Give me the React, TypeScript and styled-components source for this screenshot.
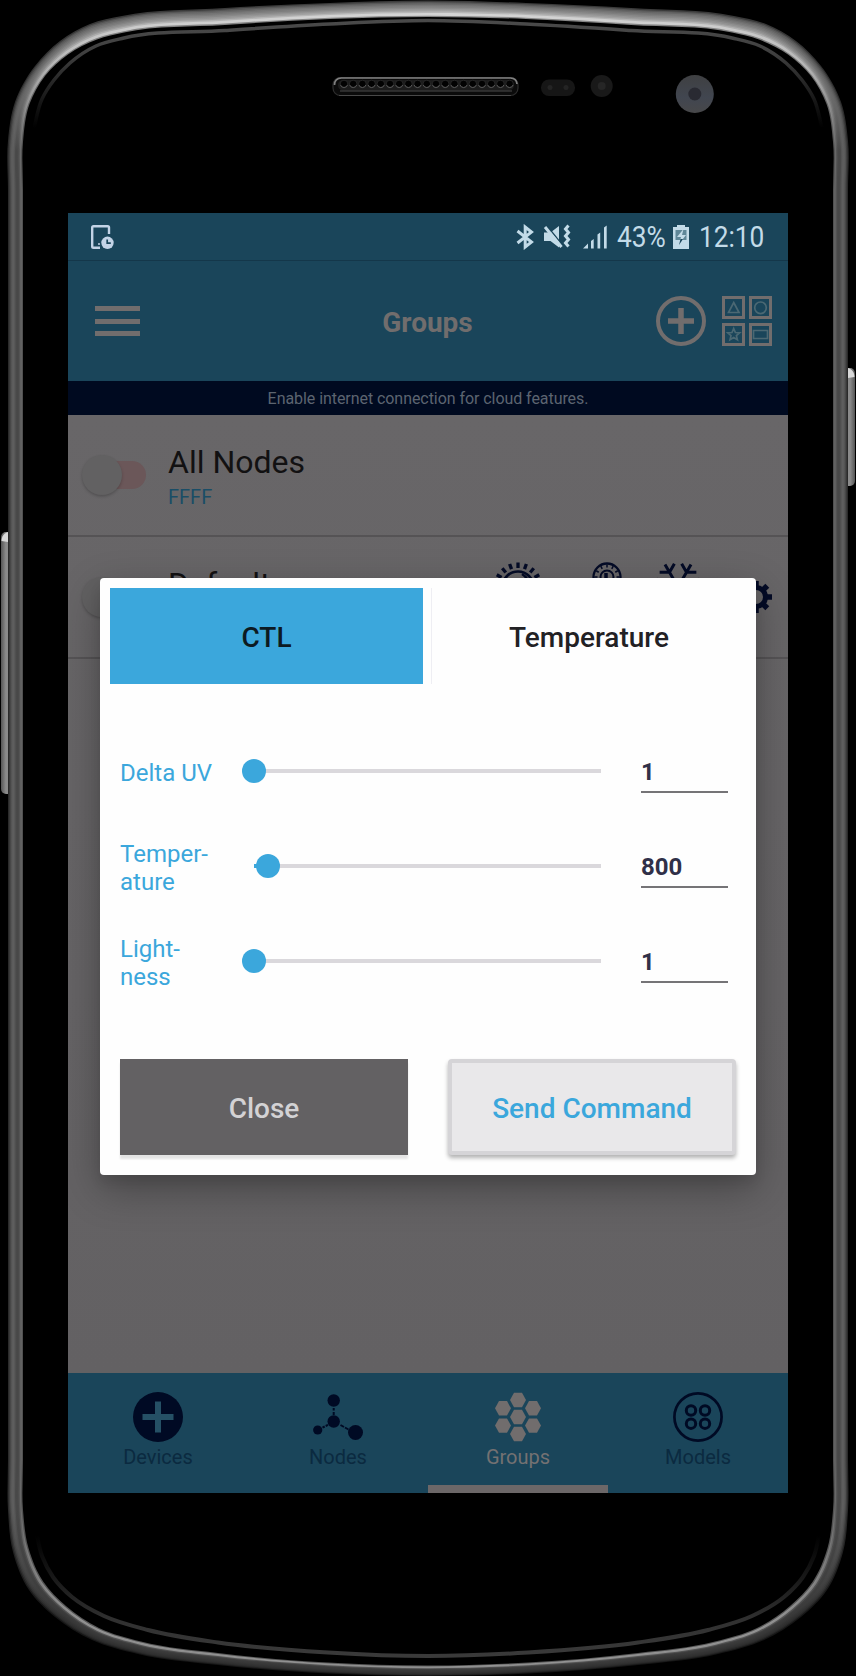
import React from "react";
import styled, { createGlobalStyle } from "styled-components";

const GlobalStyle = createGlobalStyle`
  *, *::before, *::after { box-sizing: border-box; }
  body { margin: 0; background: #000; font-family: Roboto, "Liberation Sans", sans-serif; }
`;

const colors = {
  bar: "#1a455a",
  navy: "#000a24",
  dimWhite: "#716d6d",
  page: "#666466",
  accent: "#3ba7dc",
};

/* ---------- device frame ---------- */

type Pt = [number, number];

const topOuter: Pt[] = [[8, 190], [8, 141], [15, 102], [35, 66], [60, 41], [90, 24], [122, 16], [225, 8], [330, 3], [428, 0.5]];
const topInner: Pt[] = [[23, 190], [23, 142], [29.5, 104], [45, 76], [68, 54.5], [97, 39.5], [124, 32.5], [225, 25], [330, 19], [428, 17]];
const bottomOuter: Pt[] = [[8, 1460], [8, 1510], [13, 1552], [29, 1590], [55, 1617], [92, 1640], [138, 1654], [218, 1665], [328, 1673.5], [428, 1676]];
const bottomInner: Pt[] = [[23, 1460], [23, 1510], [28.5, 1548], [43.5, 1582], [66, 1606], [99, 1628], [141, 1641.5], [218, 1653], [328, 1662.5], [428, 1665.5]];
const topRim: Pt[] = [[34, 128], [42, 99], [54, 80], [70, 63], [96, 46], [124, 38], [225, 30.5], [330, 24], [428, 20.5]];
const bottomRim: Pt[] = [[36, 1530], [42, 1556], [53, 1577], [72, 1597], [104, 1616], [148, 1630], [218, 1642.5], [328, 1652.5], [428, 1656]];

const mirror = (pts: Pt[]): Pt[] => [
  ...pts,
  ...pts.slice(0, -1).reverse().map(([x, y]): Pt => [856 - x, y]),
];

const dist = (a: Pt, b: Pt) => Math.hypot(b[0] - a[0], b[1] - a[1]);

/* smooth curve through unevenly spaced points, tangents weighted by chord length */
function spline(pts: Pt[]): string {
  const tangents = pts.map((p, i): Pt => {
    const a = pts[i - 1];
    const b = pts[i + 1];
    if (!a) return [(b[0] - p[0]) / dist(p, b), (b[1] - p[1]) / dist(p, b)];
    if (!b) return [(p[0] - a[0]) / dist(a, p), (p[1] - a[1]) / dist(a, p)];
    const da = dist(a, p);
    const db = dist(p, b);
    const mix = (k: 0 | 1) =>
      (((p[k] - a[k]) / da) * db + ((b[k] - p[k]) / db) * da) / (da + db);
    return [mix(0), mix(1)];
  });
  let d = "";
  for (let i = 0; i < pts.length - 1; i++) {
    const p = pts[i];
    const q = pts[i + 1];
    const h = dist(p, q) / 3;
    const [t, u] = [tangents[i], tangents[i + 1]];
    d += `C${p[0] + t[0] * h} ${p[1] + t[1] * h} ${q[0] - u[0] * h} ${q[1] - u[1] * h} ${q[0]} ${q[1]}`;
  }
  return d;
}

const blend = (a: Pt[], b: Pt[], t: number): Pt[] =>
  a.map(([x, y], i): Pt => [x + (b[i][0] - x) * t, y + (b[i][1] - y) * t]);

function outline(t: number): string {
  const top = mirror(blend(topOuter, topInner, t));
  const bottom = mirror(blend(bottomOuter, bottomInner, t)).reverse();
  return `M${top[0].join(" ")}${spline(top)}L${bottom[0].join(" ")}${spline(bottom)}Z`;
}

const openCurve = (pts: Pt[]) => {
  const all = mirror(pts);
  return `M${all[0].join(" ")}${spline(all)}`;
};

/* metal shade across the band, outside to inside: [top, side, bottom] */
const shades: [number, number, number][] = [
  [60, 42, 22], [88, 62, 38], [106, 82, 46], [120, 92, 50], [130, 94, 53], [142, 86, 56],
  [155, 74, 58], [168, 72, 62], [190, 74, 82], [220, 86, 140], [220, 104, 148], [140, 80, 88],
];

const gray = (v: number) => `rgb(${v},${v},${v})`;

const FrameSvg = styled.svg`
  position: absolute;
  inset: 0;
`;

function DeviceFrame() {
  return (
    <FrameSvg width="856" height="1676" viewBox="0 0 856 1676">
      <defs>
        {shades.map(([top, side, bottom], i) => (
          <linearGradient key={i} id={`band${i}`} gradientUnits="userSpaceOnUse" x1="0" y1="0" x2="0" y2="1676">
            <stop offset="0" stopColor={gray(top)} />
            <stop offset="0.04" stopColor={gray(Math.round(top * 0.82))} />
            <stop offset="0.09" stopColor={gray(side)} />
            <stop offset="0.9" stopColor={gray(side)} />
            <stop offset="0.965" stopColor={gray(bottom)} />
            <stop offset="1" stopColor={gray(bottom)} />
          </linearGradient>
        ))}
        <linearGradient id="rimTop" gradientUnits="userSpaceOnUse" x1="0" y1="20" x2="0" y2="128">
          <stop offset="0" stopColor="#4a4a4a" />
          <stop offset="0.3" stopColor="#404040" />
          <stop offset="1" stopColor="#000" />
        </linearGradient>
        <linearGradient id="rimBottom" gradientUnits="userSpaceOnUse" x1="0" y1="1535" x2="0" y2="1656">
          <stop offset="0" stopColor="#000" />
          <stop offset="0.7" stopColor="#303030" />
          <stop offset="1" stopColor="#3a3a3a" />
        </linearGradient>
        <linearGradient id="sideKey" x1="0" y1="0" x2="1" y2="0">
          <stop offset="0" stopColor="#555" />
          <stop offset="0.4" stopColor="#8a8a8a" />
          <stop offset="0.6" stopColor="#8a8a8a" />
          <stop offset="1" stopColor="#555" />
        </linearGradient>
        <linearGradient id="camera" x1="0" y1="0" x2="0" y2="1">
          <stop offset="0" stopColor="#3f4042" />
          <stop offset="0.6" stopColor="#414650" />
          <stop offset="1" stopColor="#48484a" />
        </linearGradient>
      </defs>
      <rect x="1" y="532" width="12" height="262" rx="5" fill="url(#sideKey)" />
      <path d="M1.500 541c0-5 3-8 6.500-9v10z" fill="#d8d8d8" />
      <rect x="843" y="368" width="12" height="118" rx="5" fill="url(#sideKey)" />
      <path d="M854.500 377c0-5-3-8-6.500-9v10z" fill="#d8d8d8" />
      {shades.map((_, i) => (
        <path key={i} d={outline(i / shades.length)} fill={`url(#band${i})`} />
      ))}
      <path d={outline(1)} fill="#000" />
      <path d={openCurve(topRim)} fill="none" stroke="url(#rimTop)" strokeWidth="3.500" />
      <path d={openCurve(bottomRim)} fill="none" stroke="url(#rimBottom)" strokeWidth="4" />

      <rect x="333" y="77.500" width="185" height="18" rx="7.500" fill="#0b0b0b" stroke="#2e2e2e" strokeWidth="1.200" />
      <path d="M334.500 85q0-6.700 7-7h169q6 .3 6.500 6" fill="none" stroke="#808080" strokeWidth="1.700" />
      <rect x="338" y="80" width="176" height="10.500" rx="5" fill="#1c1c1c" />
      <path d="M340 91h172" stroke="#4c4c4c" strokeWidth="1.200" />
      <path d="M339 95.500h172" stroke="#484848" strokeWidth="1.200" />
      {Array.from({ length: 19 }, (_, i) => (
        <g key={i}>
          <circle cx={344 + i * 9.2} cy="84" r="3.800" fill="#020202" stroke="#303030" strokeWidth="0.700" />
          <path d={`M${340.5 + i * 9.2} 85a3.700 3.700 0 0 0 7 0`} fill="none" stroke="#5a5a5a" strokeWidth="1" />
        </g>
      ))}
      <rect x="541" y="79.500" width="34" height="16.500" rx="8" fill="#161616" />
      <circle cx="550" cy="87.500" r="2.500" fill="#242424" />
      <circle cx="566" cy="87.500" r="2.500" fill="#242424" />
      <circle cx="601.700" cy="86" r="11" fill="#191919" />
      <circle cx="601.700" cy="86" r="4" fill="#262626" />
      <circle cx="694.800" cy="94" r="19" fill="url(#camera)" />
      <circle cx="694.800" cy="94" r="6.500" fill="#292a32" />
    </FrameSvg>
  );
}

/* ---------- layout ---------- */

const Device = styled.div`
  position: relative;
  width: 856px;
  height: 1676px;
  padding: 213px 68px 183px;
  overflow: hidden;
  background: #000;
`;

const Screen = styled.div`
  position: relative;
  width: 720px;
  height: 1280px;
  display: flex;
  flex-direction: column;
  background: ${colors.page};
`;

const StatusBar = styled.div`
  height: 48px;
  display: flex;
  align-items: center;
  padding: 1px 24px 0 23px;
  background: ${colors.bar};
  border-bottom: 1px solid #14374a;
  color: #c3dbe8;
`;

const StatusRight = styled.div`
  margin-left: auto;
  display: flex;
  align-items: center;
`;

const StatusText = styled.span<{ $width: number }>`
  display: block;
  width: ${(p) => p.$width}px;
  font-size: 30px;
  line-height: 48px;
  white-space: nowrap;
  transform: scaleX(0.875);
  transform-origin: 0 50%;
`;

const Glyph = styled.svg<{ $gap?: number }>`
  display: block;
  flex: none;
  margin-right: ${(p) => p.$gap ?? 0}px;
`;

const Toolbar = styled.header`
  height: 120px;
  display: grid;
  grid-template-columns: 1fr auto 1fr;
  align-items: center;
  padding: 0 16px 0 27px;
  background: ${colors.bar};
`;

const Title = styled.h1`
  margin: 4px 0 0 -12px;
  font-size: 28px;
  line-height: 36px;
  font-weight: 700;
  color: ${colors.dimWhite};
`;

const Menu = styled.div`
  width: 45px;
  height: 30px;
  display: flex;
  flex-direction: column;
  justify-content: space-between;
`;

const MenuLine = styled.i`
  height: 5px;
  background: ${colors.dimWhite};
`;

const Actions = styled.div`
  display: flex;
  justify-content: flex-end;
  gap: 16px;
`;

const Banner = styled.div`
  height: 34px;
  background: #000a20;
  color: #5c6470;
  font-size: 16px;
  letter-spacing: -0.06px;
  line-height: 35px;
  text-align: center;
`;

const Group = styled.section`
  height: 122px;
  display: flex;
  padding: 0 16px 0 13px;
  border-bottom: 2px solid #555355;
`;

const Toggle = styled.div`
  width: 66px;
  height: 42px;
  margin-top: 39px;
  padding: 7px 1px 7px 12px;
  display: flex;
`;

const ToggleTrack = styled.div`
  flex: 1;
  display: flex;
  align-items: center;
  border-radius: 14px;
  background: #6b5759;
`;

const ToggleThumb = styled.div`
  flex: none;
  width: 40px;
  height: 40px;
  margin-left: -11px;
  border-radius: 50%;
  background: #626162;
  box-shadow: 0 1.5px 3px rgba(0, 0, 0, 0.22);
`;

const GroupText = styled.div`
  padding: 26px 0 0 21px;
  display: flex;
  flex-direction: column;
`;

const GroupName = styled.span`
  font-size: 32px;
  line-height: 42px;
  color: #121112;
`;

const GroupAddress = styled.span`
  margin-top: 2px;
  font-size: 20px;
  line-height: 25px;
  color: #1a4d66;
`;

const GroupIcons = styled.div`
  margin-left: auto;
  display: flex;
  padding-top: 25px;
`;

const Body = styled.main`
  flex: 1;
  background: linear-gradient(#686668, #636163);
`;

const BottomNav = styled.nav`
  height: 120px;
  display: grid;
  grid-template-columns: repeat(4, 1fr);
  background: ${colors.bar};
`;

const NavItem = styled.div<{ $active?: boolean }>`
  display: flex;
  flex-direction: column;
  align-items: center;
  padding-top: 19px;
  border-bottom: 8px solid ${(p) => (p.$active ? "#6c6768" : "transparent")};
  color: ${(p) => (p.$active ? "#747172" : "#0b2a40")};
  font-size: 20px;
  line-height: 24px;
`;

const NavLabel = styled.span`
  margin-top: 3px;
`;

/* ---------- dialog ---------- */

const Dialog = styled.div`
  position: absolute;
  left: 32px;
  top: 365px;
  width: 656px;
  height: 597px;
  padding: 10px;
  border-radius: 4px;
  background: #fefefe;
  box-shadow: 0 14px 40px rgba(0, 0, 0, 0.3), 0 8px 12px rgba(0, 0, 0, 0.08);
`;

const Tabs = styled.div`
  display: flex;
  justify-content: space-between;
`;

const Tab = styled.div<{ $active?: boolean }>`
  width: ${(p) => (p.$active ? 313 : 315)}px;
  height: 96px;
  border-left: ${(p) => (p.$active ? "none" : "1px solid #eeeef3")};
  background: ${(p) => (p.$active ? colors.accent : "transparent")};
  color: ${(p) => (p.$active ? "#0c1a22" : "#222124")};
  font-size: 28px;
  font-weight: 500;
  line-height: 100px;
  text-align: center;
`;

const Fields = styled.div`
  padding: 39px 18px 0 10px;
`;

const Field = styled.div`
  height: 95px;
  display: grid;
  grid-template-columns: 122px 371px 1fr;
  align-items: center;
`;

const FieldLabel = styled.div`
  margin-top: 4px;
  color: ${colors.accent};
  font-size: 24px;
  line-height: 28px;
  white-space: pre-line;
`;

const Slider = styled.div`
  height: 24px;
  padding: 0 12px;
  display: flex;
  align-items: center;
`;

const SliderFill = styled.div`
  height: 4px;
  background: ${colors.accent};
`;

const SliderThumb = styled.div`
  flex: none;
  width: 24px;
  height: 24px;
  margin: 0 -12px;
  border-radius: 50%;
  background: ${colors.accent};
  z-index: 1;
`;

const SliderRest = styled.div`
  flex: 1;
  height: 4px;
  background: #dad8dc;
`;

const FieldValue = styled.div`
  align-self: start;
  width: 87px;
  height: 50px;
  margin: 20px 0 0 28px;
  padding-top: 15px;
  border-bottom: 2px solid #757477;
  color: #303048;
  font-size: 24px;
  font-weight: 700;
  line-height: 28px;
`;

const Buttons = styled.div`
  display: flex;
  justify-content: space-between;
  padding: 51px 10px 0 10px;
`;

const Button = styled.div<{ $primary?: boolean }>`
  width: 288px;
  height: 96px;
  border: ${(p) => (p.$primary ? "4px solid #d5d4d7" : "none")};
  border-radius: ${(p) => (p.$primary ? 4 : 0)}px;
  background: ${(p) => (p.$primary ? "#e9e8ea" : "#636163")};
  box-shadow: ${(p) =>
    p.$primary ? "0 3px 4px rgba(0,0,0,.3)" : "0 4px 2px rgba(0,0,0,.1)"};
  color: ${(p) => (p.$primary ? colors.accent : "#d3d2d4")};
  font-size: 28px;
  font-weight: 500;
  line-height: ${(p) => (p.$primary ? 92 : 100)}px;
  text-align: center;
`;

/* ---------- icons ---------- */

const StatusIcons = {
  phoneClock: (
    <Glyph width="23" height="24" viewBox="0 0 23 24">
      <path d="M18 9V2.500Q18 1.200 16.700 1.200H2.500Q1.200 1.200 1.200 2.500V21.500Q1.200 22.800 2.500 22.800H9" fill="none" stroke="#c3d3e6" strokeWidth="2.400" />
      <circle cx="16.500" cy="17.800" r="6.200" fill="#c3d3e6" />
      <path d="M16.200 14.500v3.700h3.600" fill="none" stroke={colors.bar} strokeWidth="1.700" />
      <circle cx="8" cy="19" r="1" fill="#c3d3e6" />
    </Glyph>
  ),
  bluetooth: (
    <Glyph width="18" height="26" viewBox="0 0 18 26" $gap={9}>
      <path d="M1.500 7 15.500 18 9.200 23V3L15.500 8 1.500 19" fill="none" stroke="#c3dbe8" strokeWidth="3" />
    </Glyph>
  ),
  muted: (
    <Glyph width="28" height="26" viewBox="0 0 28 26" $gap={12}>
      <path d="M1 8.500h6.500L16 2v21.500L7.500 17H1z" fill="#c3dbe8" />
      <path d="M4 2 19 20.500" stroke={colors.bar} strokeWidth="1.500" />
      <path d="M2 3 18.500 23" stroke="#c3dbe8" strokeWidth="3" />
      <path d="M25.500 1.500l-3 3.500 3 3.500-3 3.500 3 3.500-3 3.500 3 3.500" fill="none" stroke="#c3dbe8" strokeWidth="3" />
    </Glyph>
  ),
  signal: (
    <Glyph width="25" height="26" viewBox="0 0 25 26" $gap={9}>
      <path d="M0 24.500 5 19.500v5zM8 17l2.700-2v9.500H8zM14.500 10.500l2.700-2v16h-2.700zM21 3.500l2.700-2v23H21z" fill="#c3dbe8" />
    </Glyph>
  ),
  battery: (
    <Glyph width="16" height="26" viewBox="0 0 16 26" $gap={10}>
      <path d="M4 1h8v2h4v22H0V3h4z" fill="#c3dbe8" />
      <path d="M2.500 6h11v10h-11z" fill="#5f8798" />
      <path d="M10.500 5 4 13h4l-2 7 7-9H9z" fill="#c3dbe8" />
      <path d="M7.500 15h2.500l-4 6z" fill={colors.bar} />
    </Glyph>
  ),
};

const AddIcon = () => (
  <Glyph width="50" height="50" viewBox="0 0 50 50" fill="none" stroke={colors.dimWhite}>
    <circle cx="25" cy="25" r="23" strokeWidth="4" />
    <path d="M25 12v26M12 25h26" strokeWidth="5.500" />
  </Glyph>
);

const ShapesIcon = () => (
  <Glyph width="50" height="50" viewBox="0 0 50 50" fill="none" stroke={colors.dimWhite} strokeWidth="3">
    <path d="M1.500 1.500h20v20h-20zM28.500 1.500h20v20h-20zM1.500 28.500h20v20h-20zM28.500 28.500h20v20h-20z" />
    <g stroke="#4b6873" strokeWidth="1.700">
      <path d="M11.700 6.500 17 16.500H6.500z" />
      <circle cx="38.500" cy="11.800" r="5.800" />
      <path d="M11.700 32.500l1.700 4 4.300.3-3.300 2.800 1 4.200-3.700-2.300L8 43.800l1-4.200-3.300-2.800 4.300-.3z" />
      <path d="M31.500 34.500h14v8h-14z" />
    </g>
  </Glyph>
);

const ink = "#040b26";

const SunIcon = () => (
  <Glyph width="50" height="50" viewBox="-25 -25 50 50" $gap={44} stroke={ink} fill="none">
    <circle r="15.500" strokeWidth="2.700" />
    {Array.from({ length: 18 }, (_, i) => (
      <path key={i} d="M0-19V-24.500" strokeWidth="3.300" transform={`rotate(${i * 20})`} />
    ))}
    <path d="M4-13Q12-8 11 0" strokeWidth="2.500" />
  </Glyph>
);

const DialIcon = () => (
  <Glyph width="40" height="50" viewBox="-20 -15 40 50" $gap={26} stroke={ink} fill="none">
    <circle r="13.500" strokeWidth="2.300" />
    <circle r="6.500" strokeWidth="2" />
    {Array.from({ length: 12 }, (_, i) => (
      <path key={i} d="M0-9.500V-12.500" strokeWidth="1.500" transform={`rotate(${i * 30})`} />
    ))}
    <path d="M-1-4V3" strokeWidth="3.500" />
  </Glyph>
);

const SnowIcon = () => (
  <Glyph width="50" height="50" viewBox="-25 -25 50 50" $gap={37} stroke={ink} fill="none" strokeWidth="3">
    {Array.from({ length: 6 }, (_, i) => (
      <path key={i} d="M0 0V-26M-8.500-22 0-17 8.500-22" transform={`rotate(${i * 60 + 30})`} />
    ))}
  </Glyph>
);

const GearIcon = () => (
  <Glyph width="32" height="32" viewBox="-16 -16 32 32" fill="none">
    <circle r="9.500" stroke={ink} strokeWidth="5" />
    {Array.from({ length: 8 }, (_, i) => (
      <path key={i} d="M0-10V-16" stroke={ink} strokeWidth="5.500" transform={`rotate(${i * 45})`} />
    ))}
  </Glyph>
);

const GearSlot = styled.div`
  padding-top: 19px;
`;

const DevicesIcon = () => (
  <Glyph width="50" height="50" viewBox="0 0 50 50">
    <circle cx="25" cy="25" r="25" fill={colors.navy} />
    <path d="M25 9.500v31M9.500 25h31" stroke="#255065" strokeWidth="6" />
  </Glyph>
);

const NodesIcon = () => (
  <Glyph width="50" height="50" viewBox="0 0 50 50" fill={colors.navy} stroke="none">
    <circle cx="20.700" cy="8.500" r="6.200" />
    <circle cx="20.700" cy="29.500" r="6.200" />
    <circle cx="4.700" cy="38" r="4.600" />
    <circle cx="42.500" cy="40.500" r="7.500" />
    <path d="M20.700 16v2.500M20.700 20v3M27.500 33l3.500 2M32 35.500l3.500 2M15 32.800l-2.300 1.200M11.700 34.500l-2.200 1.200" stroke={colors.navy} strokeWidth="2" />
  </Glyph>
);

const hexCenters: Pt[] = [[25, 8], [10, 16.3], [40, 16.3], [25, 25], [10, 33.6], [40, 33.6], [25, 42]];

const GroupsIcon = () => (
  <Glyph width="50" height="50" viewBox="0 0 50 50" fill={colors.dimWhite}>
    {hexCenters.map(([x, y]) => (
      <path key={`${x}-${y}`} d="M-8 0-4-7.200H4L8 0 4 7.200H-4z" transform={`translate(${x} ${y})`} />
    ))}
  </Glyph>
);

const ModelsIcon = () => (
  <Glyph width="50" height="50" viewBox="0 0 50 50" fill="none" stroke={colors.navy} strokeWidth="2.700">
    <circle cx="25" cy="25" r="23.600" />
    <circle cx="18" cy="18.500" r="4.700" strokeWidth="3" />
    <circle cx="32" cy="18.500" r="4.700" strokeWidth="3" />
    <circle cx="18" cy="31.700" r="4.700" strokeWidth="3" />
    <circle cx="32" cy="31.700" r="4.700" strokeWidth="3" />
  </Glyph>
);

/* ---------- content ---------- */

const fields = [
  { label: "Delta UV", value: "1", offset: 0 },
  { label: "Temper-\nature", value: "800", offset: 4.1 },
  { label: "Light-\nness", value: "1", offset: 0 },
];

const navItems = [
  { label: "Devices", Icon: DevicesIcon },
  { label: "Nodes", Icon: NodesIcon },
  { label: "Groups", Icon: GroupsIcon, active: true },
  { label: "Models", Icon: ModelsIcon },
];

const GroupToggle = () => (
  <Toggle>
    <ToggleTrack>
      <ToggleThumb />
    </ToggleTrack>
  </Toggle>
);

export default function App() {
  return (
    <Device>
      <GlobalStyle />
      <DeviceFrame />
      <Screen>
        <StatusBar>
          {StatusIcons.phoneClock}
          <StatusRight>
            {StatusIcons.bluetooth}
            {StatusIcons.muted}
            {StatusIcons.signal}
            <StatusText $width={56}>43%</StatusText>
            {StatusIcons.battery}
            <StatusText $width={65}>12:10</StatusText>
          </StatusRight>
        </StatusBar>
        <Toolbar>
          <Menu>
            <MenuLine />
            <MenuLine />
            <MenuLine />
          </Menu>
          <Title>Groups</Title>
          <Actions>
            <AddIcon />
            <ShapesIcon />
          </Actions>
        </Toolbar>
        <Banner>Enable internet connection for cloud features.</Banner>
        <Body>
          <Group>
            <GroupToggle />
            <GroupText>
              <GroupName>All Nodes</GroupName>
              <GroupAddress>FFFF</GroupAddress>
            </GroupText>
          </Group>
          <Group>
            <GroupToggle />
            <GroupText>
              <GroupName>Default</GroupName>
            </GroupText>
            <GroupIcons>
              <SunIcon />
              <DialIcon />
              <SnowIcon />
              <GearSlot>
                <GearIcon />
              </GearSlot>
            </GroupIcons>
          </Group>
        </Body>
        <BottomNav>
          {navItems.map(({ label, Icon, active }) => (
            <NavItem key={label} $active={active}>
              <Icon />
              <NavLabel>{label}</NavLabel>
            </NavItem>
          ))}
        </BottomNav>
        <Dialog>
          <Tabs>
            <Tab $active>CTL</Tab>
            <Tab>Temperature</Tab>
          </Tabs>
          <Fields>
            {fields.map((f) => (
              <Field key={f.label}>
                <FieldLabel>{f.label}</FieldLabel>
                <Slider>
                  <SliderFill style={{ width: `${f.offset}%` }} />
                  <SliderThumb />
                  <SliderRest />
                </Slider>
                <FieldValue>{f.value}</FieldValue>
              </Field>
            ))}
          </Fields>
          <Buttons>
            <Button>Close</Button>
            <Button $primary>Send Command</Button>
          </Buttons>
        </Dialog>
      </Screen>
    </Device>
  );
}
